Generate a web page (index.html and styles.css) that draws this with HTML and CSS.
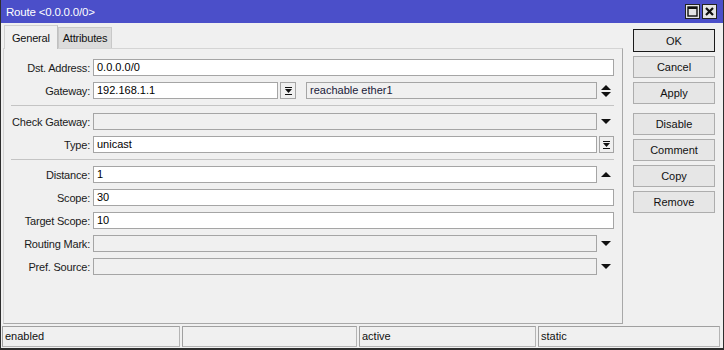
FILE: index.html
```html
<!DOCTYPE html>
<html>
<head>
<meta charset="utf-8">
<link rel="stylesheet" href="styles.css">
</head>
<body>
<div class="window">
  <div class="titlebar">
    <span class="title">Route &lt;0.0.0.0/0&gt;</span>
    <div class="tb-btns">
      <span class="tb-btn"><svg width="11" height="11" viewBox="0 0 11 11"><rect x="1" y="1" width="9" height="9" fill="none" stroke="#111" stroke-width="1.4"/><rect x="1" y="1" width="9" height="2" fill="#111"/></svg></span>
      <span class="tb-btn"><svg width="11" height="11" viewBox="0 0 11 11"><path d="M2 2 L9 9 M9 2 L2 9" stroke="#111" stroke-width="2.2"/></svg></span>
    </div>
  </div>
  <div class="content">
    <div class="main">
      <div class="tabs">
        <div class="tab active">General</div>
        <div class="tab">Attributes</div>
      </div>
      <div class="panel">
        <div class="row">
          <div class="label">Dst. Address:</div>
          <div class="ctrl"><div class="field">0.0.0.0/0</div></div>
        </div>
        <div class="row">
          <div class="label">Gateway:</div>
          <div class="ctrl">
            <div class="field gw">192.168.1.1</div>
            <div class="sqbtn gwbtn"><svg width="7" height="8" viewBox="0 0 7 8"><rect x="0" y="0" width="7" height="1" fill="#111"/><polygon points="0,2 7,2 3.5,6" fill="#111"/><rect x="0" y="7" width="7" height="1" fill="#111"/></svg></div>
            <div class="field dis reach">reachable ether1</div>
            <div class="icon"><svg width="10" height="12" viewBox="0 0 10 12"><polygon points="0,5 10,5 5,0" fill="#111"/><polygon points="0,7 10,7 5,12" fill="#111"/></svg></div>
          </div>
        </div>
        <div class="sep first"></div>
        <div class="row">
          <div class="label">Check Gateway:</div>
          <div class="ctrl">
            <div class="field dis"></div>
            <div class="icon"><svg width="10" height="5" viewBox="0 0 10 5"><polygon points="0,0 10,0 5,5" fill="#111"/></svg></div>
          </div>
        </div>
        <div class="row">
          <div class="label">Type:</div>
          <div class="ctrl">
            <div class="field">unicast</div>
            <div class="icon"><div class="sqbtn"><svg width="7" height="8" viewBox="0 0 7 8"><rect x="0" y="0" width="7" height="1" fill="#111"/><polygon points="0,2 7,2 3.5,6" fill="#111"/><rect x="0" y="7" width="7" height="1" fill="#111"/></svg></div></div>
          </div>
        </div>
        <div class="sep"></div>
        <div class="row">
          <div class="label">Distance:</div>
          <div class="ctrl">
            <div class="field">1</div>
            <div class="icon"><svg width="10" height="5" viewBox="0 0 10 5"><polygon points="0,5 10,5 5,0" fill="#111"/></svg></div>
          </div>
        </div>
        <div class="row">
          <div class="label">Scope:</div>
          <div class="ctrl"><div class="field">30</div></div>
        </div>
        <div class="row">
          <div class="label">Target Scope:</div>
          <div class="ctrl"><div class="field">10</div></div>
        </div>
        <div class="row">
          <div class="label">Routing Mark:</div>
          <div class="ctrl">
            <div class="field dis"></div>
            <div class="icon"><svg width="10" height="5" viewBox="0 0 10 5"><polygon points="0,0 10,0 5,5" fill="#111"/></svg></div>
          </div>
        </div>
        <div class="row">
          <div class="label">Pref. Source:</div>
          <div class="ctrl">
            <div class="field dis"></div>
            <div class="icon"><svg width="10" height="5" viewBox="0 0 10 5"><polygon points="0,0 10,0 5,5" fill="#111"/></svg></div>
          </div>
        </div>
      </div>
    </div>
    <div class="side">
      <div class="btn default">OK</div>
      <div class="btn">Cancel</div>
      <div class="btn">Apply</div>
      <div class="btn group">Disable</div>
      <div class="btn">Comment</div>
      <div class="btn">Copy</div>
      <div class="btn">Remove</div>
    </div>
  </div>
  <div class="statusbar">
    <div class="seg s1">enabled</div>
    <div class="seg s2"></div>
    <div class="seg s3">active</div>
    <div class="seg s4">static</div>
  </div>
</div>
</body>
</html>
```
FILE: styles.css
```css
html, body {
  margin: 0;
  padding: 0;
  background: #f0f0f0;
}
body {
  font-family: "Liberation Sans", Arial, sans-serif;
  font-size: 11px;
  color: #111;
}
.window {
  width: 724px;
  height: 350px;
  box-sizing: border-box;
  border: 1px solid #2e2e2e;
  border-top: none;
  border-bottom-width: 2px;
  display: flex;
  flex-direction: column;
  background: #f0f0f0;
  overflow: hidden;
}
.titlebar {
  height: 23px;
  flex: none;
  background: #4b4fc9;
  display: flex;
  align-items: center;
  justify-content: space-between;
  padding: 0 6px 0 5px;
  margin: 0 -1px;
  border-left: 1px solid #4b4fc9;
  border-right: 1px solid #4b4fc9;
  box-sizing: border-box;
}
.title {
  color: #fff;
  font-size: 11.5px;
  letter-spacing: -0.2px;
  padding-top: 1px;
}
.tb-btns {
  display: flex;
  gap: 2px;
  margin-top: -1px;
}
.tb-btn {
  width: 15px;
  height: 15px;
  box-sizing: border-box;
  border: 1px solid #222;
  background: #e4e4e4;
  display: flex;
  align-items: center;
  justify-content: center;
}
.content {
  display: flex;
  padding: 2px 0 0 2px;
  height: 299px;
  flex: none;
}
.main {
  width: 620px;
  display: flex;
  flex-direction: column;
}
.tabs {
  display: flex;
  height: 23px;
  align-items: flex-end;
  padding-left: 1px;
  position: relative;
  z-index: 1;
}
.tab {
  box-sizing: border-box;
  height: 21px;
  padding: 0 4px 0 4px;
  border: 1px solid #c8c8c8;
  border-bottom: none;
  background: #dcdcdc;
  display: flex;
  align-items: center;
  font-size: 11px;
  letter-spacing: -0.2px;
}
.tab.active {
  height: 24px;
  margin-bottom: -1px;
  background: #f0f0f0;
  padding: 0 7px 0 7px;
  border-color: #d0d0d0;
  border-right-color: #c0c0c0;
}
.panel {
  height: 276px;
  box-sizing: border-box;
  border: 1px solid #a8a8a8;
  border-top-color: #d4d4d4;
  border-left-color: #d4d4d4;
  padding: 10px 8px 0 0;
  display: flex;
  flex-direction: column;
  gap: 6px;
}
.row {
  display: grid;
  grid-template-columns: 89px 1fr;
  height: 17px;
  align-items: center;
}
.label {
  text-align: right;
  padding-right: 3px;
  white-space: nowrap;
  color: #1a1a1a;
  letter-spacing: -0.2px;
}
.ctrl {
  display: flex;
  height: 17px;
  align-items: stretch;
}
.field {
  flex: 1;
  box-sizing: border-box;
  height: 17px;
  border: 1px solid #a5a5a5;
  background: #fff;
  padding: 0 3px;
  line-height: 15px;
  color: #000;
  white-space: nowrap;
  overflow: hidden;
}
.field.dis {
  background: #f0f0f0;
}
.field.gw {
  flex: none;
  width: 185px;
}
.field.reach {
  margin-left: 10px;
  color: #1a1a3a;
}
.sqbtn {
  width: 16px;
  height: 17px;
  box-sizing: border-box;
  border: 1px solid #a5a5a5;
  background: #f0f0f0;
  display: flex;
  align-items: center;
  justify-content: center;
}
.gwbtn {
  margin-left: 2px;
}
.icon {
  width: 17px;
  flex: none;
  display: flex;
  align-items: center;
  justify-content: center;
}
.icon .sqbtn {
  width: 15px;
  margin-left: 1px;
}
.sep {
  height: 1px;
  background: #c4c4c4;
  margin: 0 0 0 7px;
}
.sep.first {
  margin-bottom: 1px;
}
.side {
  width: 82px;
  margin-left: 10px;
  padding-top: 4px;
  display: flex;
  flex-direction: column;
  gap: 4px;
}
.btn {
  height: 22px;
  box-sizing: border-box;
  border: 1px solid #adadad;
  background: #e6e6e6;
  display: flex;
  align-items: center;
  justify-content: center;
  font-size: 11px;
  color: #111;
}
.btn.default {
  border-color: #1a1a1a;
  height: 23px;
}
.btn.group {
  margin-top: 5px;
}
.statusbar {
  display: flex;
  gap: 2px;
  margin-top: 2px;
  padding: 0 3px 0 1px;
  height: 21px;
  flex: none;
}
.seg {
  box-sizing: border-box;
  height: 21px;
  border: 1px solid #b4b4b4;
  border-top-color: #a0a0a0;
  border-left-color: #a0a0a0;
  padding: 0 2px;
  line-height: 19px;
  white-space: nowrap;
}
.s1 { width: 178px; }
.s2 { width: 175px; }
.s3 { width: 177px; }
.s4 { flex: 1; }
```
